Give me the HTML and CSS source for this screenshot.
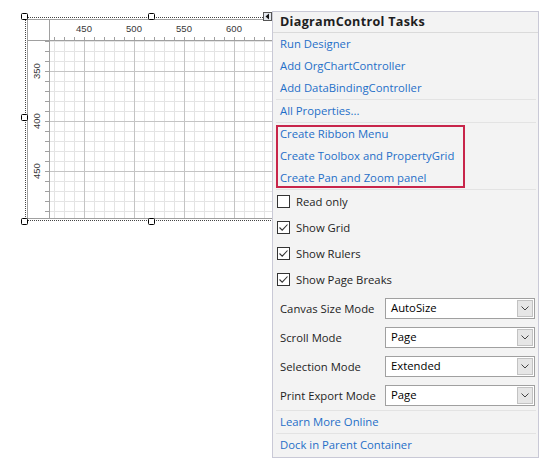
FILE: index.html
```html
<!DOCTYPE html>
<html>
<head>
<meta charset="utf-8">
<link rel="stylesheet" href="styles.css">
</head>
<body>
<div class="page">
  <div class="designer">
    <div class="frame">
      <div class="control">
        <div class="corner"></div>
        <div class="hruler"><span>450</span><span>500</span><span>550</span><span>600</span></div>
        <div class="vruler"><span>350</span><span>400</span><span>450</span></div>
        <div class="canvas"></div>
      </div>
      <span class="handle h-tl"></span>
      <span class="handle h-tm"></span>
      <span class="handle h-ml"></span>
      <span class="handle h-bl"></span>
      <span class="handle h-bm"></span>
      <span class="smarttag"><svg width="7" height="7" viewBox="0 0 7 7"><path d="M5 0.5 L1.5 3.5 L5 6.5 Z" fill="#111"/></svg></span>
    </div>
  </div>
  <div class="panel">
    <div class="title">DiagramControl Tasks</div>
    <div class="link-row">Run Designer</div>
    <div class="link-row">Add OrgChartController</div>
    <div class="link-row">Add DataBindingController</div>
    <div class="sep"></div>
    <div class="link-row">All Properties...</div>
    <div class="sep"></div>
    <div class="highlight">
      <div class="link-row">Create Ribbon Menu</div>
      <div class="link-row">Create Toolbox and PropertyGrid</div>
      <div class="link-row">Create Pan and Zoom panel</div>
    </div>
    <div class="sep"></div>
    <div class="check-row"><span class="box"></span><span>Read only</span></div>
    <div class="check-row"><span class="box"><svg width="11" height="11" viewBox="0 0 11 11"><path d="M1.5 5.5 L4.2 8.2 L9.5 2.5" fill="none" stroke="#333" stroke-width="1.1"/></svg></span><span>Show Grid</span></div>
    <div class="check-row"><span class="box"><svg width="11" height="11" viewBox="0 0 11 11"><path d="M1.5 5.5 L4.2 8.2 L9.5 2.5" fill="none" stroke="#333" stroke-width="1.1"/></svg></span><span>Show Rulers</span></div>
    <div class="check-row"><span class="box"><svg width="11" height="11" viewBox="0 0 11 11"><path d="M1.5 5.5 L4.2 8.2 L9.5 2.5" fill="none" stroke="#333" stroke-width="1.1"/></svg></span><span>Show Page Breaks</span></div>
    <div class="combo-row"><span class="label">Canvas Size Mode</span><div class="combo"><span class="value">AutoSize</span><span class="btn"><svg width="8" height="5" viewBox="0 0 8 5"><path d="M0.5 0.5 L4 4 L7.5 0.5" fill="none" stroke="#444" stroke-width="1"/></svg></span></div></div>
    <div class="combo-row"><span class="label">Scroll Mode</span><div class="combo"><span class="value">Page</span><span class="btn"><svg width="8" height="5" viewBox="0 0 8 5"><path d="M0.5 0.5 L4 4 L7.5 0.5" fill="none" stroke="#444" stroke-width="1"/></svg></span></div></div>
    <div class="combo-row"><span class="label">Selection Mode</span><div class="combo"><span class="value">Extended</span><span class="btn"><svg width="8" height="5" viewBox="0 0 8 5"><path d="M0.5 0.5 L4 4 L7.5 0.5" fill="none" stroke="#444" stroke-width="1"/></svg></span></div></div>
    <div class="combo-row"><span class="label">Print Export Mode</span><div class="combo"><span class="value">Page</span><span class="btn"><svg width="8" height="5" viewBox="0 0 8 5"><path d="M0.5 0.5 L4 4 L7.5 0.5" fill="none" stroke="#444" stroke-width="1"/></svg></span></div></div>
    <div class="sep"></div>
    <div class="link-row">Learn More Online</div>
    <div class="sep"></div>
    <div class="link-row">Dock in Parent Container</div>
  </div>
</div>
</body>
</html>
```
FILE: styles.css
```css
html, body {
  margin: 0;
  padding: 0;
  background: #ffffff;
}
body {
  font-family: "Open Sans", "Noto Sans", sans-serif;
  font-size: 11.3px;
  color: #1e1e1e;
}
.page {
  display: flex;
  align-items: flex-start;
}
.designer {
  width: 272px;
  height: 230px;
  padding-top: 17px;
  box-sizing: border-box;
  overflow: hidden;
  flex-shrink: 0;
}
.frame {
  position: relative;
  margin-left: 25px;
  width: 254px;
  height: 204px;
  box-sizing: border-box;
  border-top: 1px dotted #444;
  border-left: 1px dotted #444;
  border-bottom: 1px dotted #444;
  padding: 1px 0 1px 1px;
}
.control {
  height: 200px;
  box-sizing: border-box;
  border: 1px solid #a0a0a0;
  border-right: none;
  display: grid;
  grid-template-columns: 22px 1fr;
  grid-template-rows: 21px 1fr;
  background: #fff;
}
.corner {
  border-right: 1px solid #a0a0a0;
  border-bottom: 1px solid #a0a0a0;
}
.hruler {
  border-bottom: 1px solid #a0a0a0;
  display: flex;
  padding-left: 9px;
  padding-top: 4px;
  box-sizing: border-box;
  background-image: linear-gradient(to right, #a0a0a0 1px, transparent 1px);
  background-size: 10px 3px;
  background-position: 4px 100%;
  background-repeat: repeat-x;
}
.hruler span {
  width: 50px;
  flex-shrink: 0;
  text-align: center;
  font-family: "Liberation Sans", Arial, sans-serif;
  font-size: 9.5px;
  line-height: 10px;
  color: #383838;
}
.vruler {
  border-right: 1px solid #a0a0a0;
  display: flex;
  flex-direction: column;
  align-items: center;
  padding-top: 5px;
  padding-right: 3px;
  box-sizing: border-box;
  background-image: linear-gradient(to bottom, #a0a0a0 1px, transparent 1px);
  background-size: 4px 10px;
  background-position: 100% 0;
  background-repeat: repeat-y;
}
.vruler span {
  height: 50px;
  flex-shrink: 0;
  writing-mode: vertical-rl;
  transform: rotate(180deg);
  text-align: center;
  font-family: "Liberation Sans", Arial, sans-serif;
  font-size: 9.5px;
  line-height: 10px;
  color: #383838;
}
.canvas {
  background-color: #fff;
  background-image:
    linear-gradient(to right, #c4c4c4 1px, transparent 1px),
    linear-gradient(to bottom, #c4c4c4 1px, transparent 1px),
    linear-gradient(to right, #e4e4e4 1px, transparent 1px),
    linear-gradient(to bottom, #e4e4e4 1px, transparent 1px);
  background-size: 50px 100%, 100% 50px, 10px 100%, 100% 10px;
  background-position: 34px 0, 0 30px, 4px 0, 0 0;
}
.handle {
  position: absolute;
  width: 5px;
  height: 5px;
  border: 1.5px solid #000;
  border-radius: 1.5px;
  background: #fff;
}
.h-tl { left: -5px; top: -5px; }
.h-tm { left: 122px; top: -5px; }
.h-ml { left: -5px; top: 96px; }
.h-bl { left: -5px; bottom: -5px; }
.h-bm { left: 122px; bottom: -5px; }
.smarttag {
  position: absolute;
  left: 237px;
  top: -6px;
  width: 7px;
  height: 7px;
  border: 1px solid #555;
  background: #e4e8ee;
  display: flex;
  align-items: center;
  justify-content: center;
}
.smarttag svg { display: block; }

.panel {
  width: 265px;
  margin-top: 11px;
  border: 1px solid #c9c9d6;
  background: #f3f3f3;
  padding-bottom: 1px;
  flex-shrink: 0;
}
.title {
  box-sizing: border-box;
  height: 21px;
  line-height: 20px;
  padding-left: 7px;
  font-size: 12.6px;
  letter-spacing: 0.3px;
  font-weight: bold;
  color: #1e1e1e;
  border-bottom: 1px solid #dadada;
}
.link-row {
  height: 22px;
  box-sizing: border-box;
  padding-bottom: 2px;
  display: flex;
  align-items: center;
  padding-left: 7px;
  color: #1f6fc8;
  white-space: nowrap;
}
.sep {
  height: 1px;
  background: #e3e3e3;
  margin: 0 2px 0 3px;
}
.highlight {
  position: relative;
}
.highlight::after {
  content: "";
  position: absolute;
  left: 3px;
  top: 2px;
  width: 185px;
  bottom: 1px;
  border: 2px solid #c8254a;
}
.check-row {
  height: 26px;
  padding-bottom: 3px;
  box-sizing: border-box;
  display: flex;
  align-items: center;
  padding-left: 4px;
  gap: 6px;
}
.check-row span:last-child {
  padding-bottom: 1px;
}
.box {
  width: 11px;
  height: 11px;
  border: 1px solid #333;
  background: #fff;
  display: flex;
  align-items: center;
  justify-content: center;
}
.box svg { display: block; }
.combo-row {
  height: 29px;
  display: flex;
  align-items: center;
  padding-left: 7px;
}
.label {
  width: 105px;
  flex-shrink: 0;
  padding-bottom: 1px;
}
.combo {
  width: 150px;
  height: 21px;
  box-sizing: border-box;
  border: 1px solid #a0a0a0;
  background: #fff;
  display: flex;
  align-items: center;
  padding: 1px;
  color: #000;
}
.value {
  flex: 1;
  padding-left: 4px;
  padding-bottom: 2px;
}
.btn {
  width: 16px;
  height: 17px;
  box-sizing: border-box;
  border: 1px solid #c2c2c2;
  background: #e6e6e6;
  display: flex;
  align-items: center;
  justify-content: center;
}
.btn svg { display: block; }
```
